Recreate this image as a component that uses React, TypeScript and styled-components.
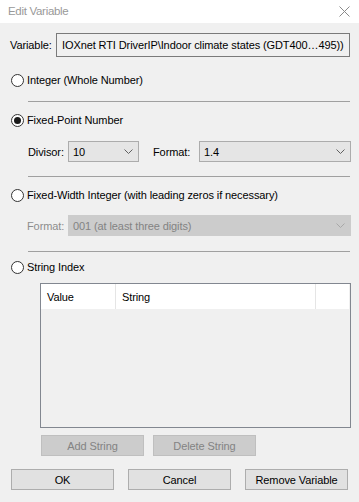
import React from "react";
import styled, { createGlobalStyle } from "styled-components";

const Global = createGlobalStyle`
  html, body { margin: 0; padding: 0; background: #f0f0f0; }
  * { box-sizing: border-box; }
`;

const Window = styled.div`
  width: 359px;
  height: 502px;
  display: flex;
  flex-direction: column;
  background: #f0f0f0;
  font-family: "Liberation Sans", Arial, sans-serif;
  font-size: 11px;
  letter-spacing: -0.1px;
  color: #000;
  overflow: hidden;
`;

const TitleBar = styled.div`
  height: 23px;
  background: #fff;
  display: flex;
  align-items: center;
  justify-content: space-between;
  padding: 0 9px 1px 8px;
  color: #999;
  font-size: 11.5px;
  letter-spacing: -0.3px;
`;

const Body = styled.div`
  display: flex;
  flex-direction: column;
  padding: 0 8px 0 10px;
`;

const VariableRow = styled.div`
  margin-top: 10px;
  height: 24px;
  display: flex;
  align-items: center;
`;

const Label = styled.span<{ $disabled?: boolean; $w?: number }>`
  color: ${(p) => (p.$disabled ? "#8d8d8d" : "#000")};
  width: ${(p) => (p.$w ? `${p.$w}px` : "auto")};
  flex: none;
  white-space: nowrap;
`;

const ReadOnlyField = styled.div`
  flex: 1;
  height: 24px;
  margin-right: 1px;
  border: 1px solid #7a7a7a;
  background: #f0f0f0;
  display: flex;
  align-items: center;
  padding-left: 5px;
  white-space: nowrap;
  overflow: hidden;
`;

const RadioRow = styled.label<{ $mt: number }>`
  margin-top: ${(p) => p.$mt}px;
  height: 16px;
  display: flex;
  align-items: center;
  gap: 3px;
  margin-left: 1px;
`;

const RadioCircle = styled.span<{ $checked?: boolean }>`
  width: 13px;
  height: 13px;
  border-radius: 50%;
  border: 1px solid #333;
  background: #fff;
  display: flex;
  align-items: center;
  justify-content: center;
  flex: none;
  &::after {
    content: "";
    width: 7px;
    height: 7px;
    border-radius: 50%;
    background: ${(p) => (p.$checked ? "#1a1a1a" : "transparent")};
  }
`;

const Separator = styled.div<{ $mt: number }>`
  margin-top: ${(p) => p.$mt}px;
  margin-left: 18px;
  margin-right: 1px;
  height: 1px;
  background: #a0a0a0;
`;

const FieldRow = styled.div<{ $mt: number; $ml: number }>`
  margin-top: ${(p) => p.$mt}px;
  margin-left: ${(p) => p.$ml}px;
  height: 21px;
  display: flex;
  align-items: center;
`;

const Combo = styled.div<{ $w?: number; $disabled?: boolean }>`
  width: ${(p) => (p.$w ? `${p.$w}px` : "auto")};
  flex: ${(p) => (p.$w ? "none" : "1")};
  height: 21px;
  border: 1px solid ${(p) => (p.$disabled ? "#cccccc" : "#acacac")};
  background: ${(p) => (p.$disabled ? "#cccccc" : "#e5e5e5")};
  color: ${(p) => (p.$disabled ? "#838383" : "#000")};
  display: flex;
  align-items: center;
  justify-content: space-between;
  padding: 0 5px 0 4px;
  white-space: nowrap;
`;

const Chevron = ({ color }: { color: string }) => (
  <svg width="9" height="5" viewBox="0 0 9 5">
    <polyline points="0.5,0.5 4.5,4.5 8.5,0.5" fill="none" stroke={color} strokeWidth="1" />
  </svg>
);

const ListBox = styled.div`
  margin-top: 8px;
  margin-left: 30px;
  height: 145px;
  border: 1px solid #828790;
  background: #f0f0f0;
  display: flex;
  flex-direction: column;
`;

const HeaderRow = styled.div`
  height: 25px;
  background: #fff;
  display: grid;
  grid-template-columns: 75px 200px 1fr;
  margin-right: 1px;
`;

const HeaderCell = styled.div<{ $last?: boolean }>`
  display: flex;
  align-items: center;
  padding-left: 6px;
  border-right: ${(p) => (p.$last ? "none" : "1px solid #e5e5e5")};
`;

const ButtonRow = styled.div<{ $mt: number; $ml: number; $gap: number }>`
  margin-top: ${(p) => p.$mt}px;
  margin-left: ${(p) => p.$ml}px;
  display: flex;
  gap: ${(p) => p.$gap}px;
`;

const Button = styled.button<{ $disabled?: boolean }>`
  width: 103px;
  height: 21px;
  font: inherit;
  letter-spacing: inherit;
  border: 1px solid ${(p) => (p.$disabled ? "#bfbfbf" : "#adadad")};
  background: ${(p) => (p.$disabled ? "#cccccc" : "#e1e1e1")};
  color: ${(p) => (p.$disabled ? "#838383" : "#000")};
  padding: 0;
  display: flex;
  align-items: center;
  justify-content: center;
`;

const CloseIcon = () => (
  <svg width="11" height="11" viewBox="0 0 11 11">
    <path d="M0.5 0.5 L10.5 10.5 M10.5 0.5 L0.5 10.5" stroke="#8a8a8a" strokeWidth="1" />
  </svg>
);

export default function App() {
  return (
    <>
      <Global />
      <Window>
        <TitleBar>
          <span>Edit Variable</span>
          <CloseIcon />
        </TitleBar>
        <Body>
          <VariableRow>
            <Label $w={46}>Variable:</Label>
            <ReadOnlyField>IOXnet RTI DriverIP\Indoor climate states (GDT400…495))</ReadOnlyField>
          </VariableRow>

          <RadioRow $mt={15}>
            <RadioCircle />
            Integer (Whole Number)
          </RadioRow>

          <Separator $mt={13} />

          <RadioRow $mt={10}>
            <RadioCircle $checked />
            Fixed-Point Number
          </RadioRow>

          <FieldRow $mt={13} $ml={18}>
            <Label $w={40}>Divisor:</Label>
            <Combo $w={71}>
              <span>10</span>
              <Chevron color="#606060" />
            </Combo>
            <Label $w={46} style={{ marginLeft: 14 }}>Format:</Label>
            <Combo>
              <span>1.4</span>
              <Chevron color="#606060" />
            </Combo>
          </FieldRow>

          <Separator $mt={14} />

          <RadioRow $mt={10}>
            <RadioCircle />
            Fixed-Width Integer (with leading zeros if necessary)
          </RadioRow>

          <FieldRow $mt={12} $ml={17}>
            <Label $w={41} $disabled>Format:</Label>
            <Combo $disabled>
              <span>001 (at least three digits)</span>
              <Chevron color="#a8a8a8" />
            </Combo>
          </FieldRow>

          <Separator $mt={15} />

          <RadioRow $mt={7}>
            <RadioCircle />
            String Index
          </RadioRow>

          <ListBox>
            <HeaderRow>
              <HeaderCell>Value</HeaderCell>
              <HeaderCell>String</HeaderCell>
              <HeaderCell $last />
            </HeaderRow>
          </ListBox>

          <ButtonRow $mt={7} $ml={31} $gap={9}>
            <Button $disabled>Add String</Button>
            <Button $disabled>Delete String</Button>
          </ButtonRow>

          <ButtonRow $mt={13} $ml={1} $gap={14}>
            <Button>OK</Button>
            <Button>Cancel</Button>
            <Button>Remove Variable</Button>
          </ButtonRow>
        </Body>
      </Window>
    </>
  );
}
